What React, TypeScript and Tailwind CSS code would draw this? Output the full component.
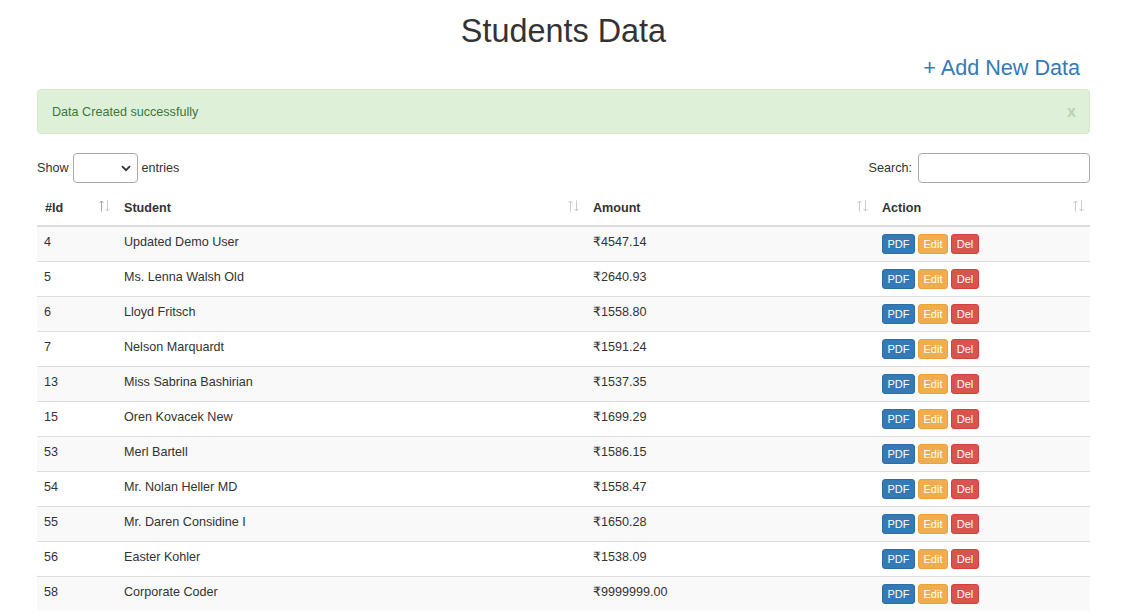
import React from "react";

type Student = { id: number; name: string; amount: string };

const students: Student[] = [
  { id: 4, name: "Updated Demo User", amount: "4547.14" },
  { id: 5, name: "Ms. Lenna Walsh Old", amount: "2640.93" },
  { id: 6, name: "Lloyd Fritsch", amount: "1558.80" },
  { id: 7, name: "Nelson Marquardt", amount: "1591.24" },
  { id: 13, name: "Miss Sabrina Bashirian", amount: "1537.35" },
  { id: 15, name: "Oren Kovacek New", amount: "1699.29" },
  { id: 53, name: "Merl Bartell", amount: "1586.15" },
  { id: 54, name: "Mr. Nolan Heller MD", amount: "1558.47" },
  { id: 55, name: "Mr. Daren Considine I", amount: "1650.28" },
  { id: 56, name: "Easter Kohler", amount: "1538.09" },
  { id: 58, name: "Corporate Coder", amount: "9999999.00" },
];

// sorting arrows like the DataTables header
function SortIcon({ active }: { active?: boolean }) {
  return (
    <svg className="absolute right-[6px] top-[9px]" width="11" height="12" viewBox="0 0 11 12" fill="none" strokeWidth="1">
      <path d="M2.5 11.5 V1 M0.5 3 L2.5 1 L4.5 3" stroke={active ? "#9f9fe0" : "#c9c9c9"} />
      <path d="M8.5 0.5 V11 M6.5 9 L8.5 11 L10.5 9" stroke="#c9c9c9" />
    </svg>
  );
}

function HeadCell({ label, width, active }: { label: string; width: string; active?: boolean }) {
  return (
    <th
      className={`relative ${width} text-left font-bold pl-[8px] pt-[8px] pb-[8px] leading-[18px] border-b-2 border-[#ddd] align-bottom`}
    >
      {label}
      <SortIcon active={active} />
    </th>
  );
}

export default function App() {
  return (
    <div
      className="min-h-screen bg-white text-[#333] text-[12.6px] leading-[18px]"
      style={{ fontFamily: '"Liberation Sans", "DejaVu Sans", Arial, sans-serif' }}
    >
      <div className="pl-[37px] pr-[31px]">
        <h1 className="mt-[13px] text-center text-[32.4px] leading-[36px] font-normal">Students Data</h1>

        <div className="mt-[7px] flex justify-end pr-[10px]">
          <a href="#" className="text-[21.6px] leading-[24px] text-[#337ab7]">
            + Add New Data
          </a>
        </div>

        <div className="mt-[9px] flex h-[45px] items-center justify-between rounded-[4px] border border-[#d6e9c6] bg-[#dff0d8] pl-[14px] pr-[13px] text-[#3c763d]">
          <span>Data Created successfully</span>
          <span className="text-[16px] font-bold text-[#b9d3b1]">x</span>
        </div>

        <div className="mt-[19px] flex items-center justify-between">
          <label className="flex items-center">
            <span>Show</span>
            <span className="relative mx-[4px] block h-[30px] w-[65px] rounded-[4px] border border-[#aaa] bg-white">
              <svg
                className="absolute right-[6px] top-[11px]"
                width="10"
                height="7"
                viewBox="0 0 10 7"
                fill="none"
                stroke="#333"
                strokeWidth="1.8"
              >
                <path d="M1 1.2 L5 5.2 L9 1.2" />
              </svg>
            </span>
            <span>entries</span>
          </label>
          <label className="flex items-center">
            <span className="mr-[6px]">Search:</span>
            <span className="block h-[30px] w-[172px] rounded-[4px] border border-[#aaa] bg-white" />
          </label>
        </div>

        <table className="mt-[8px] w-full border-collapse">
          <thead>
            <tr>
              <HeadCell label="#Id" width="w-[79px]" active />
              <HeadCell label="Student" width="w-[469px]" />
              <HeadCell label="Amount" width="w-[289px]" />
              <HeadCell label="Action" width="w-[216px]" />
            </tr>
          </thead>
          <tbody>
            {students.map((s, i) => (
              <tr key={s.id} className={i % 2 === 0 ? "bg-[#f9f9f9]" : "bg-white"}>
                <td className="h-[35px] border-t border-[#ddd] pl-[7px] pt-[6px] align-top">{s.id}</td>
                <td className="h-[35px] border-t border-[#ddd] pl-[8px] pt-[6px] align-top">{s.name}</td>
                <td className="h-[35px] border-t border-[#ddd] pl-[8px] pt-[6px] align-top">₹{s.amount}</td>
                <td className="h-[35px] border-t border-[#ddd] pl-[8px] pt-[7px] align-top">
                  <div className="flex gap-[3px] text-[11px] leading-[18px] text-white">
                    <button className="h-[20px] w-[33px] rounded-[3px] border border-[#2e6da4] bg-[#337ab7]">PDF</button>
                    <button className="h-[20px] w-[30px] rounded-[3px] border border-[#eea236] bg-[#f0ad4e]">Edit</button>
                    <button className="h-[20px] w-[28px] rounded-[3px] border border-[#d43f3a] bg-[#d9534f]">Del</button>
                  </div>
                </td>
              </tr>
            ))}
          </tbody>
        </table>
      </div>
    </div>
  );
}
